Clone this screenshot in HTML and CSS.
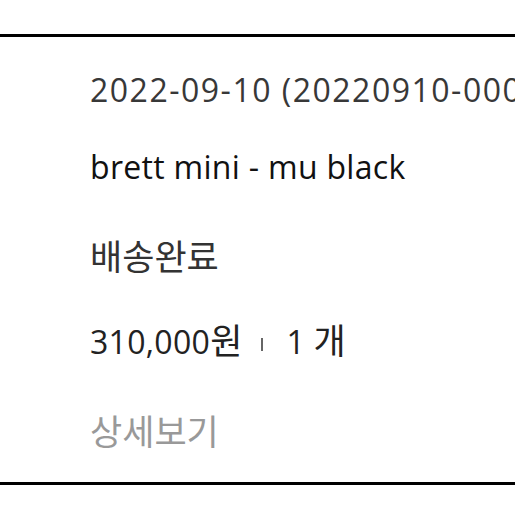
FILE: index.html
```html
<!DOCTYPE html>
<html lang="ko">
<head>
<meta charset="utf-8">
<link rel="stylesheet" href="styles.css">
</head>
<body>
<div class="card">
  <div class="row date">2022-09-10 (20220910-0001234)</div>
  <div class="row name">brett mini - mu black</div>
  <div class="row status"><span class="ko">배송완료</span></div>
  <div class="row price">310,000<span class="ko">원</span><span class="sep"></span>1 <span class="ko">개</span></div>
  <div class="row more"><span class="ko">상세보기</span></div>
</div>
</body>
</html>
```

FILE: styles.css
```css
html, body {
  margin: 0;
  padding: 0;
  background: #fff;
  overflow: hidden;
}
body {
  width: 515px;
  height: 515px;
}
.card {
  margin-top: 34px;
  border-top: 3px solid #000;
  border-bottom: 3px solid #000;
  height: 451px;
  box-sizing: border-box;
  padding: 33px 0 0 90px;
  display: flex;
  flex-direction: column;
  gap: 37px;
  font-family: "Open Sans", "Noto Sans CJK KR", sans-serif;
  font-size: 32px;
  line-height: 40px;
  letter-spacing: 0.3px;
  white-space: nowrap;
  overflow: hidden;
  color: #333;
}
.ko {
  font-family: "Noto Sans CJK KR", sans-serif;
  font-size: 35px;
  letter-spacing: 0;
}
.date { color: #383838; letter-spacing: 1.5px; }
.name { color: #111; }
.status { color: #333; margin-top: 11px; }
.price { color: #222; margin-top: 4px; }
.sep {
  display: inline-block;
  width: 2px;
  height: 13px;
  background: #666;
  margin: 0 23px 0 19px;
  vertical-align: 3px;
}
.more { color: #999; margin-top: 11px; }
```
